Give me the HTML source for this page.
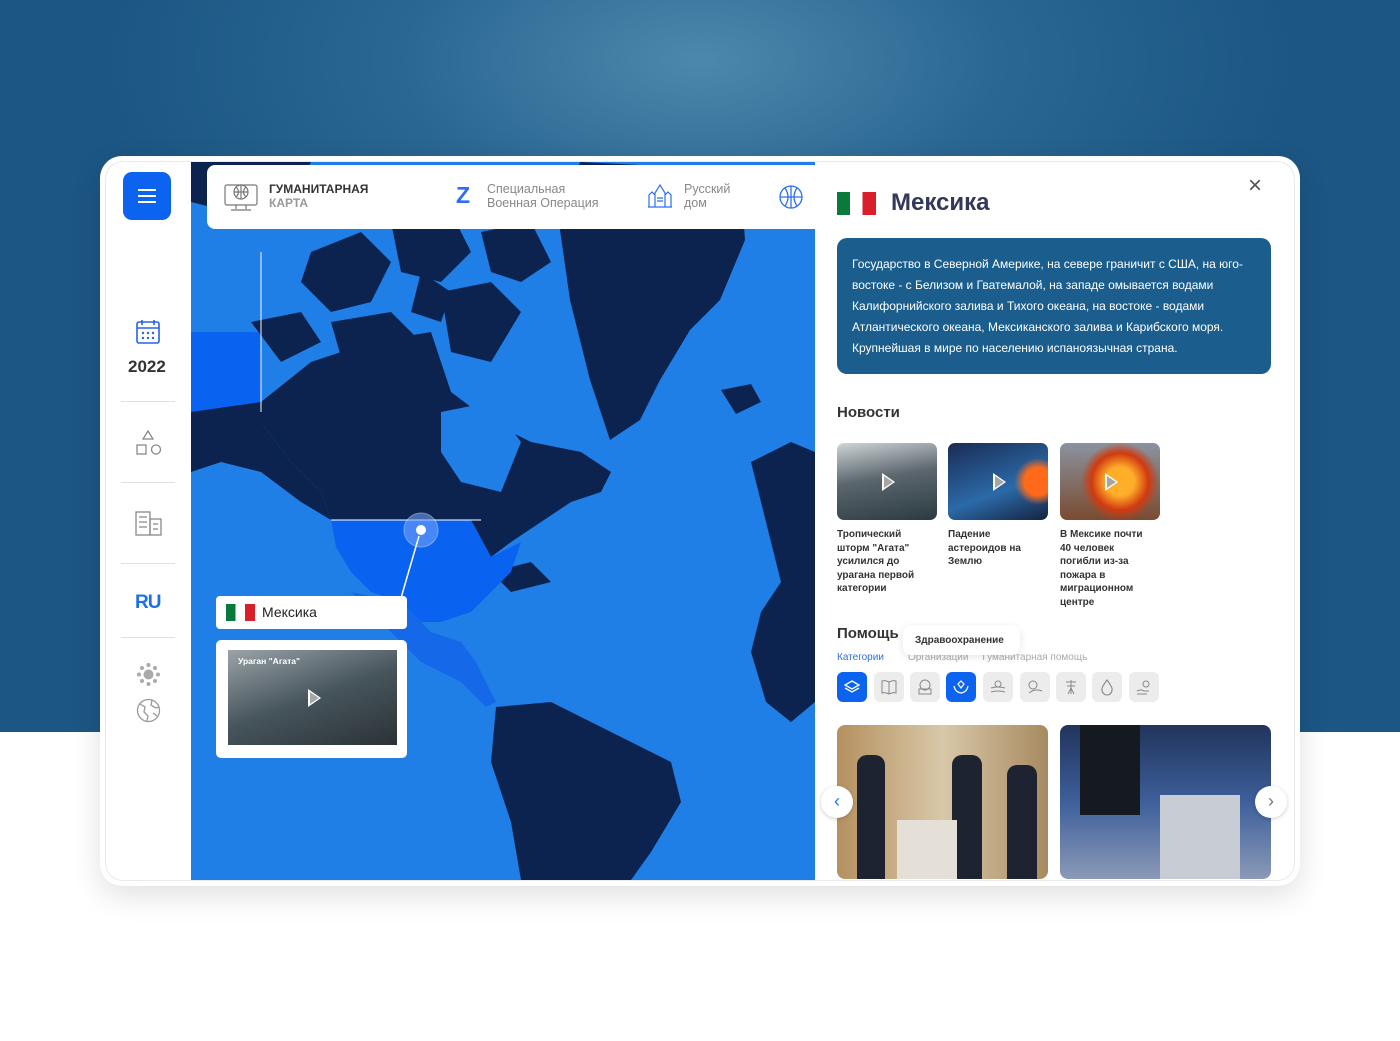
<!DOCTYPE html>
<html><head><meta charset="utf-8"><style>
*{margin:0;padding:0;box-sizing:border-box}
body{width:1400px;height:1041px;position:relative;overflow:hidden;font-family:"Liberation Sans",sans-serif;background:#fff}
.bg{position:absolute;left:0;top:0;width:1400px;height:732px;background:radial-gradient(ellipse 600px 300px at 700px 60px,#4d87ad 0%,#2a6792 50%,#1c5684 100%)}
.card{position:absolute;left:100px;top:156px;width:1200px;height:730px;background:#fff;border-radius:22px;box-shadow:0 10px 30px rgba(0,0,0,.12)}
.inner{position:absolute;left:105px;top:161px;width:1190px;height:720px;border:1px solid #e6e9ee;border-radius:18px;overflow:hidden;background:#fff}
.map{position:absolute;left:191px;top:162px;width:624px;height:718px;background:#1f7fe6;overflow:hidden}
.burger{position:absolute;left:123px;top:172px;width:48px;height:48px;background:#0b63f0;border-radius:9px}
.burger i{position:absolute;left:15px;width:18px;height:2px;background:#fff}
.sep{position:absolute;left:121px;width:54px;height:1px;background:#dde1e6}
.top{position:absolute;left:207px;top:165px;width:610px;height:64px;background:#fff;border-radius:8px 0 0 8px;font-size:12.5px;color:#888}
.desc{position:absolute;left:837px;top:238px;width:434px;height:136px;background:#1b5e8e;border-radius:10px;color:#fff;font-size:12px;line-height:21px;padding:16px 16px 16px 15px}
.news{position:absolute;top:443px;width:100px;height:77px;border-radius:7px;overflow:hidden}
.nt{position:absolute;top:528px;width:96px;font-size:10px;font-weight:bold;color:#333;line-height:13.5px}
.ic{position:absolute;top:672px;width:30px;height:30px;border-radius:6px;background:#ececec}
.ic svg{position:absolute;left:6px;top:6px}
.play{position:absolute;left:50%;top:50%;margin:-9px 0 0 -5px;width:0;height:0;border-left:13px solid #fff;border-top:9px solid transparent;border-bottom:9px solid transparent}
.play:after{content:"";position:absolute;left:-11px;top:-6px;border-left:9px solid rgba(0,0,0,.35);border-top:6px solid transparent;border-bottom:6px solid transparent}
</style></head><body>
<div class="bg"></div>
<div class="card"></div>
<div class="inner"></div>
<div class="map">
<svg width="624" height="718" viewBox="0 0 624 718">
<rect x="0" y="170" width="70" height="130" fill="#0a63f0"/>
<g fill="#0c2350">
<path d="M389 0 L549 8 L554 78 L529 138 L499 168 L469 218 L449 258 L419 278 L399 218 L379 138 L369 68Z"/>
<path d="M70 240 L120 200 L180 180 L240 170 L260 230 L300 260 L340 280 L390 290 L420 310 L410 330 L380 340 L350 360 L320 380 L300 395 L280 358 L140 358 L130 330 L100 300 L70 260Z"/>
<path d="M0 250 L70 240 L70 260 L100 300 L130 330 L140 358 L110 340 L70 310 L30 300 L0 310Z"/>
<path d="M120 90 L170 70 L200 100 L180 140 L140 150 L110 120Z"/>
<path d="M200 60 L260 50 L280 90 L250 120 L210 110Z"/>
<path d="M250 130 L300 120 L330 150 L300 200 L260 190Z"/>
<path d="M140 160 L200 150 L230 180 L190 200 L150 195Z"/>
<path d="M60 160 L110 150 L130 180 L90 200Z"/>
<path d="M290 70 L340 60 L360 100 L330 120 L300 110Z"/>
<path d="M230 110 L260 130 L250 160 L220 150Z"/>
<path d="M530 228 L560 222 L570 240 L545 252Z"/>
<path d="M560 300 L600 280 L624 290 L624 540 L600 560 L575 540 L560 490 L570 450 L590 420 L580 380 L570 340Z"/>
<path d="M305 545 L360 540 L420 570 L480 600 L490 640 L460 690 L440 718 L330 718 L320 660 L300 600Z"/>
<path d="M300 410 L340 400 L360 420 L320 430Z"/>
<path d="M0 0 L120 0 L100 40 L40 50 L0 40Z"/>
</g>
<path d="M250 250 L300 240 L330 280 L310 330 L270 320 L250 290Z" fill="#1f7fe6"/>
<path d="M140 358 L280 358 L300 395 L330 380 L320 410 L300 430 L280 450 L250 460 L230 460 L210 440 L180 430 L160 410 L145 385Z" fill="#0a63f0"/>
<path d="M160 430 L210 440 L240 470 L270 480 L285 500 L305 540 L295 545 L270 520 L250 510 L230 500 L210 480 L190 460Z" fill="#1569e8"/>
<g stroke="#fff" stroke-width="1.2" fill="none" opacity=".8"><path d="M140 358 L290 358 M70 90 L70 250"/></g>
<circle cx="230" cy="368" r="17" fill="#7aa6ff" opacity=".55" stroke="#cfe0ff"/>
<circle cx="230" cy="368" r="5" fill="#fff"/>
<path d="M228 374 L210 436" stroke="#fff" stroke-width="1.5"/>
</svg>
<div style="position:absolute;left:25px;top:434px;width:191px;height:33px;background:#fff;border-radius:4px;font-size:14px;color:#222;padding:8px 0 0 46px">Мексика
<div style="position:absolute;left:10px;top:8px;width:29px;height:17px;background:linear-gradient(90deg,#0a7a3a 33%,#fff 33% 66%,#d81f2a 66%)"></div></div>
<div style="position:absolute;left:25px;top:478px;width:191px;height:118px;background:#fff;border-radius:5px"><div style="position:absolute;left:12px;top:10px;width:169px;height:95px;background:linear-gradient(160deg,#9aa3a8,#47555c 50%,#2b3236);"><span style="position:absolute;left:10px;top:6px;color:#fff;font-size:8.5px;font-weight:bold">Ураган "Агата"</span><div class="play"></div></div></div>
</div>
<div class="burger"><i style="top:17px"></i><i style="top:23px"></i><i style="top:29px"></i></div>
<svg style="position:absolute;left:136px;top:319px" width="24" height="26" viewBox="0 0 24 26" fill="none" stroke="#2563eb" stroke-width="1.6"><rect x="1" y="3" width="22" height="21" rx="2"/><path d="M1 9h22M6 1v5M18 1v5"/><g fill="#2563eb" stroke="none"><circle cx="7" cy="14" r="1.2"/><circle cx="12" cy="14" r="1.2"/><circle cx="17" cy="14" r="1.2"/><circle cx="7" cy="19" r="1.2"/><circle cx="12" cy="19" r="1.2"/><circle cx="17" cy="19" r="1.2"/></g></svg>
<div style="position:absolute;left:128px;top:357px;font-size:17px;font-weight:bold;color:#333">2022</div>
<div class="sep" style="top:401px"></div><div class="sep" style="top:482px"></div><div class="sep" style="top:563px"></div><div class="sep" style="top:637px"></div>
<svg style="position:absolute;left:136px;top:430px" width="26" height="26" viewBox="0 0 26 26" fill="none" stroke="#888" stroke-width="1.3"><path d="M12 1 L17 9 H7Z"/><rect x="1" y="15" width="9" height="9"/><circle cx="20" cy="19.5" r="4.5"/></svg>
<svg style="position:absolute;left:135px;top:511px" width="27" height="25" viewBox="0 0 27 25" fill="none" stroke="#888" stroke-width="1.3"><rect x="1" y="1" width="14" height="23"/><rect x="15" y="8" width="11" height="16"/><path d="M4 6h8M4 11h8M4 16h8M18 13h5M18 18h5"/></svg>
<div style="position:absolute;left:135px;top:592px;font-size:19px;font-weight:bold;color:#1f6fe8;letter-spacing:-1px">R<span style="color:#1f6fe8">U</span></div>
<svg style="position:absolute;left:136px;top:662px" width="25" height="25" viewBox="0 0 25 25"><g fill="#aaa"><circle cx="12.5" cy="12.5" r="5"/><circle cx="12.5" cy="3" r="2"/><circle cx="12.5" cy="22" r="2"/><circle cx="3" cy="12.5" r="2"/><circle cx="22" cy="12.5" r="2"/><circle cx="6" cy="6" r="2"/><circle cx="19" cy="19" r="2"/><circle cx="19" cy="6" r="2"/><circle cx="6" cy="19" r="2"/></g></svg>
<svg style="position:absolute;left:136px;top:698px" width="25" height="25" viewBox="0 0 25 25" fill="none" stroke="#999" stroke-width="1.3"><circle cx="12.5" cy="12.5" r="11"/><path d="M4 6 L9 9 L8 14 L12 18 L11 23 M16 2 L15 7 L20 10 L23 9 M17 15 L21 18"/></svg>
<div class="top">
<svg style="position:absolute;left:17px;top:16px" width="34" height="32" viewBox="0 0 34 32" fill="none" stroke="#777" stroke-width="1.2"><rect x="1" y="4" width="32" height="20" rx="2"/><circle cx="17" cy="11" r="7"/><path d="M10 11h14M17 4v14M12 6q5 5 0 10M22 6q-5 5 0 10M12 24v4M22 24v4M7 29h20"/></svg>
<div style="position:absolute;left:62px;top:17px;line-height:14px"><b style="color:#333;font-size:12px">ГУМАНИТАРНАЯ</b><br><b style="color:#999;font-size:12px">КАРТА</b></div>
<div style="position:absolute;left:249px;top:17px;font-size:23px;color:#2b6ef0;font-weight:bold">Z</div>
<div style="position:absolute;left:280px;top:17px;line-height:14px">Специальная<br>Военная Операция</div>
<svg style="position:absolute;left:440px;top:18px" width="26" height="26" viewBox="0 0 26 26" fill="none" stroke="#2b6ef0" stroke-width="1.2"><path d="M1 24h24M2 24V12l3-3 3 3v12M18 24V12l3-3 3 3v12M8 24V10l5-8 5 8v14M10 18h6M10 15h6"/></svg>
<div style="position:absolute;left:477px;top:17px;line-height:14px">Русский<br>дом</div>
<svg style="position:absolute;left:571px;top:19px" width="26" height="26" viewBox="0 0 26 26" fill="none" stroke="#2b6ef0" stroke-width="1.3"><circle cx="13" cy="13" r="11"/><path d="M2 13h22M13 2v22M7 4q6 9 0 18M19 4q-6 9 0 18"/></svg>
</div>
<div style="position:absolute;left:837px;top:192px;width:39px;height:23px;background:linear-gradient(90deg,#0a7a3a 33%,#fff 33% 66%,#d81f2a 66%)"></div>
<div style="position:absolute;left:891px;top:189px;font-size:24px;font-weight:bold;color:#33395a">Мексика</div>
<div style="position:absolute;left:1248px;top:172px;font-size:24px;color:#555">×</div>
<div class="desc">Государство в Северной Америке, на севере граничит с США, на юго-востоке - с Белизом и Гватемалой, на западе омывается водами Калифорнийского залива и Тихого океана, на востоке - водами Атлантического океана, Мексиканского залива и Карибского моря. Крупнейшая в мире по населению испаноязычная страна.</div>
<div style="position:absolute;left:837px;top:404px;font-size:15px;font-weight:bold;color:#333">Новости</div>
<div class="news" style="left:837px;background:linear-gradient(170deg,#cfd5d8,#5b666d 45%,#2b3a42)"><div class="play"></div></div>
<div class="news" style="left:948px;background:radial-gradient(circle at 90% 50%,#ff6a1a 0 14%,transparent 24%),linear-gradient(160deg,#1a2c55,#2b6aa8 60%,#152240)"><div class="play"></div></div>
<div class="news" style="left:1060px;background:radial-gradient(circle at 60% 50%,#ffae2a 0 20%,#d03a10 40%,transparent 55%),linear-gradient(180deg,#8a93a0,#7a4b30)"><div class="play"></div></div>
<div class="nt" style="left:837px">Тропический шторм "Агата" усилился до урагана первой категории</div>
<div class="nt" style="left:948px;width:90px">Падение астероидов на Землю</div>
<div class="nt" style="left:1060px;width:90px">В Мексике почти 40 человек погибли из-за пожара в миграционном центре</div>
<div style="position:absolute;left:837px;top:625px;font-size:15px;font-weight:bold;color:#333">Помощь</div>
<div style="position:absolute;left:837px;top:652px;font-size:10px;color:#2b6ef0">Категории</div>
<div style="position:absolute;left:908px;top:652px;font-size:10px;color:#aaa">Организации &nbsp; &nbsp; Гуманитарная помощь</div>
<div style="position:absolute;left:903px;top:625px;width:117px;height:30px;background:#fff;border-radius:8px;box-shadow:0 2px 8px rgba(0,0,0,.1);font-size:10px;font-weight:bold;color:#333;padding:10px 0 0 12px">Здравоохранение</div>
<div class="ic" style="left:837px;background:#0b63f0"><svg width="18" height="18" viewBox="0 0 18 18" fill="none" stroke="#fff" stroke-width="1.3"><path d="M9 3 L16 7 L9 11 L2 7Z M2 10 L9 14 L16 10"/></svg></div>
<div class="ic" style="left:874px"><svg width="18" height="18" viewBox="0 0 18 18" fill="none" stroke="#888" stroke-width="1"><path d="M9 4 Q5 2 2 3 V15 Q5 14 9 16 Q13 14 16 15 V3 Q13 2 9 4Z M9 4 V16"/></svg></div>
<div class="ic" style="left:910px"><svg width="18" height="18" viewBox="0 0 18 18" fill="none" stroke="#888" stroke-width="1"><circle cx="9" cy="7" r="5"/><rect x="3" y="11" width="12" height="5"/></svg></div>
<div class="ic" style="left:946px;background:#0b63f0"><svg width="18" height="18" viewBox="0 0 18 18" fill="none" stroke="#fff" stroke-width="1.2"><path d="M9 3 l3 3 -3 4 -3-4Z M2 8 Q3 14 9 15 Q15 14 16 8"/></svg></div>
<div class="ic" style="left:983px"><svg width="18" height="18" viewBox="0 0 18 18" fill="none" stroke="#888" stroke-width="1"><circle cx="9" cy="6" r="3"/><path d="M2 10 Q9 8 16 10 M2 14 Q9 12 16 14"/></svg></div>
<div class="ic" style="left:1020px"><svg width="18" height="18" viewBox="0 0 18 18" fill="none" stroke="#888" stroke-width="1"><circle cx="7" cy="7" r="4"/><path d="M3 15 Q9 10 16 13"/></svg></div>
<div class="ic" style="left:1056px"><svg width="18" height="18" viewBox="0 0 18 18" fill="none" stroke="#888" stroke-width="1"><path d="M9 2 V16 M4 4 H14 M5 8 H13 M6 16 L9 10 L12 16"/></svg></div>
<div class="ic" style="left:1092px"><svg width="18" height="18" viewBox="0 0 18 18" fill="none" stroke="#888" stroke-width="1.1"><path d="M9 2 Q3 10 4 12 A5 5 0 0 0 14 12 Q15 10 9 2Z"/></svg></div>
<div class="ic" style="left:1129px"><svg width="18" height="18" viewBox="0 0 18 18" fill="none" stroke="#888" stroke-width="1"><circle cx="11" cy="6" r="3"/><path d="M2 13 Q6 11 9 13 H14 M2 16 H12"/></svg></div>
<div style="position:absolute;left:837px;top:725px;width:211px;height:154px;border-radius:8px;background:linear-gradient(90deg,#b59060,#d8c8a8 50%,#a88a60);overflow:hidden"><div style="position:absolute;left:20px;top:30px;width:28px;height:124px;background:#1d2330;border-radius:10px 10px 0 0"></div><div style="position:absolute;left:115px;top:30px;width:30px;height:124px;background:#1d2330;border-radius:10px 10px 0 0"></div><div style="position:absolute;left:170px;top:40px;width:30px;height:114px;background:#1d2330;border-radius:10px 10px 0 0"></div><div style="position:absolute;left:60px;top:95px;width:60px;height:59px;background:#e4e0d8"></div></div>
<div style="position:absolute;left:1060px;top:725px;width:211px;height:154px;border-radius:8px;background:linear-gradient(180deg,#21345c,#3d5f9a 50%,#8a9ab8);overflow:hidden"><div style="position:absolute;left:20px;top:0;width:60px;height:90px;background:#141a20"></div><div style="position:absolute;left:100px;top:70px;width:80px;height:84px;background:#c8ccd4"></div></div>
<div style="position:absolute;left:821px;top:786px;width:32px;height:32px;border-radius:50%;background:#fff;box-shadow:0 1px 4px rgba(0,0,0,.2);color:#2b6ef0;font-size:18px;text-align:center;line-height:30px">‹</div>
<div style="position:absolute;left:1255px;top:786px;width:32px;height:32px;border-radius:50%;background:#fff;box-shadow:0 1px 4px rgba(0,0,0,.2);color:#777;font-size:18px;text-align:center;line-height:30px">›</div>
</body></html>
